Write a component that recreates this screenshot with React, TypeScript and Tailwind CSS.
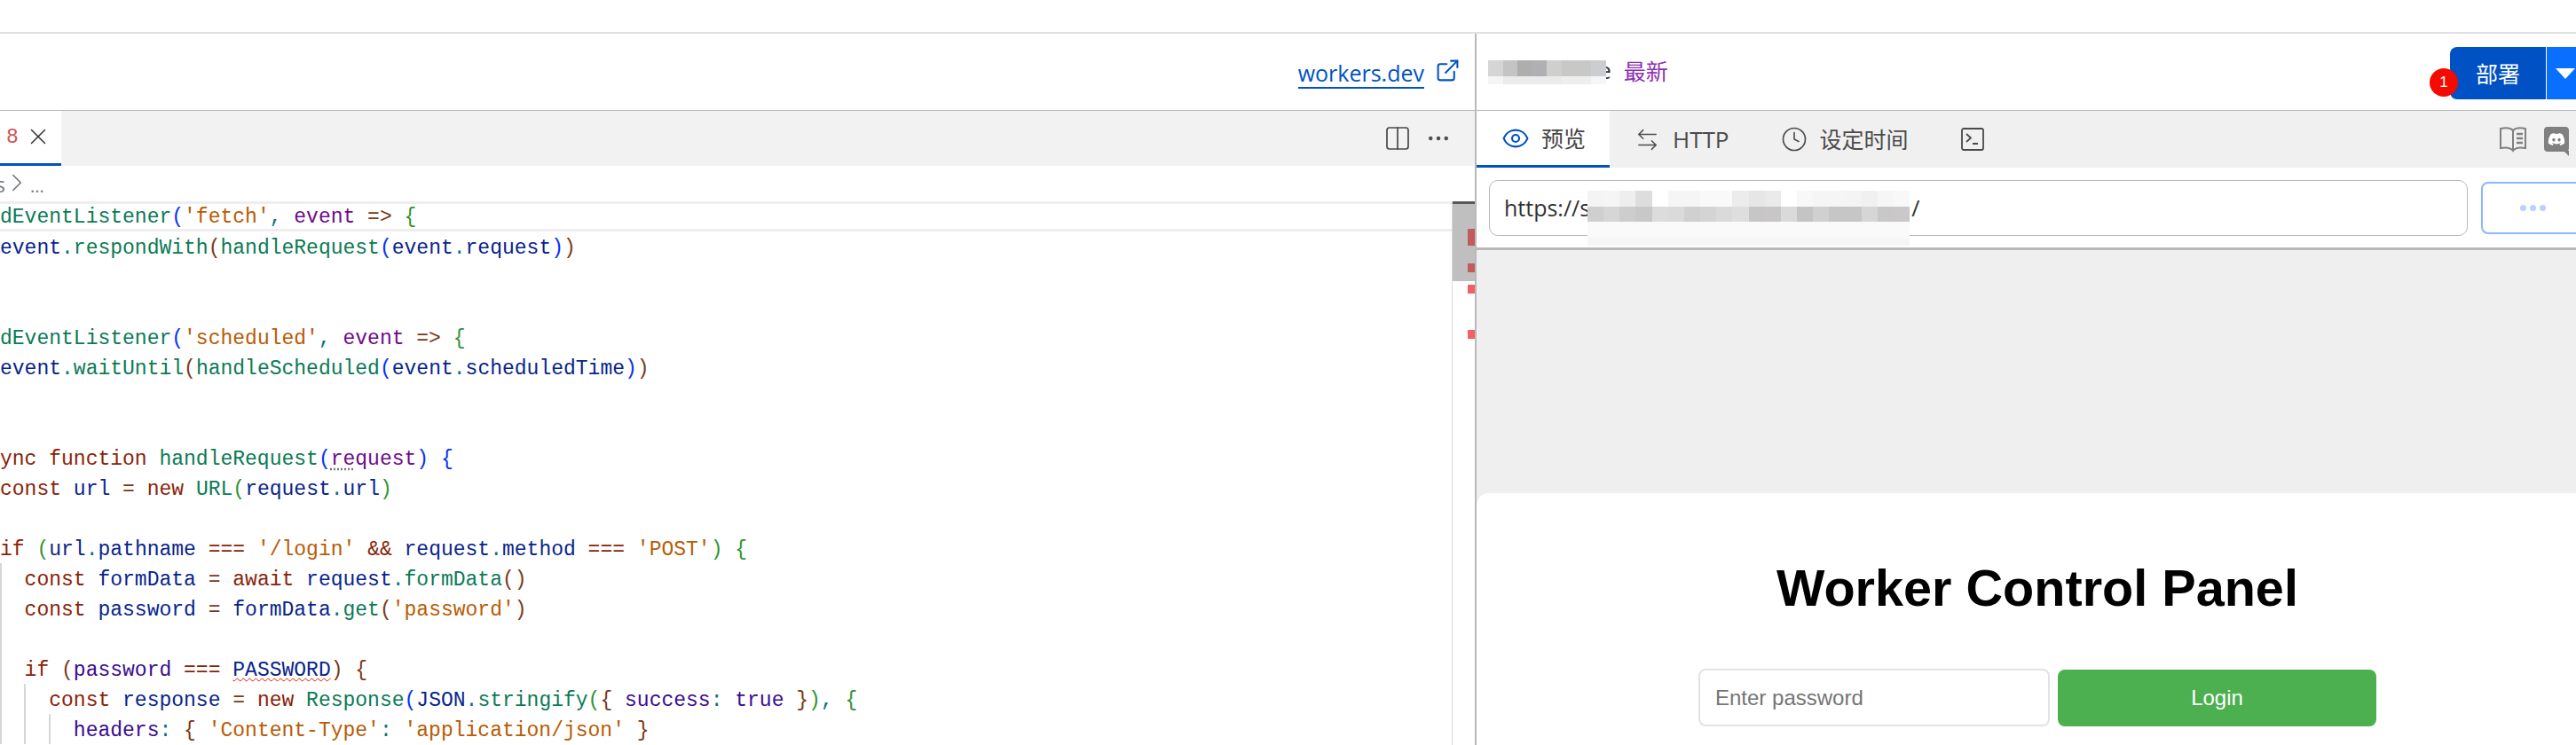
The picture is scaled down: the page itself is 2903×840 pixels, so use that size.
import React from 'react';
import { ChevronRight, Clock, Columns2, Ellipsis, ExternalLink, Eye, ArrowLeftRight, X } from 'lucide-react';
import { FaDiscord } from 'react-icons/fa';

const kw = 'text-[#8a2307]';
const vr = 'text-[#07248c]';
const fn = 'text-[#0b7a55]';
const st = 'text-[#b85b05]';
const pa = 'text-[#6f0a8a]';
const pr = 'text-[#3a0c8f]';
const op = 'text-[#7b3814]';
const b1 = 'text-[#0431fa]';
const b2 = 'text-[#319331]';
const b3 = 'text-[#7b3814]';
const pt = 'text-[#0b6f80]';

type Token = [string, string];

const codeLines: { tokens: Token[]; guides?: number }[] = [
  { tokens: [['addEventListener', fn], ['(', b1], ["'fetch'", st], [', ', pt], ['event', pa], [' => ', op], ['{', b2]] },
  { tokens: [['  event', vr], ['.', pt], ['respondWith', fn], ['(', b3], ['handleRequest', fn], ['(', b1], ['event', vr], ['.', pt], ['request', vr], [')', b1], [')', b3]] },
  { tokens: [['})', b2]] },
  { tokens: [] },
  { tokens: [['addEventListener', fn], ['(', b1], ["'scheduled'", st], [', ', pt], ['event', pa], [' => ', op], ['{', b2]] },
  { tokens: [['  event', vr], ['.', pt], ['waitUntil', fn], ['(', b3], ['handleScheduled', fn], ['(', b1], ['event', vr], ['.', pt], ['scheduledTime', vr], [')', b1], [')', b3]] },
  { tokens: [['})', b2]] },
  { tokens: [] },
  { tokens: [['async function ', kw], ['handleRequest', fn], ['(', b1], ['request', pa], [')', b1], [' ', op], ['{', b1]] },
  { tokens: [['  const ', kw], ['url', vr], [' = ', op], ['new ', kw], ['URL', fn], ['(', b2], ['request', vr], ['.', pt], ['url', vr], [')', b2]] },
  { tokens: [] },
  { tokens: [['  if ', kw], ['(', b2], ['url', vr], ['.', pt], ['pathname', vr], [' === ', kw], ["'/login'", st], [' && ', kw], ['request', vr], ['.', pt], ['method', vr], [' === ', kw], ["'POST'", st], [')', b2], [' ', op], ['{', b2]] },
  { guides: 1, tokens: [['    const ', kw], ['formData', vr], [' = ', op], ['await ', kw], ['request', vr], ['.', pt], ['formData', fn], ['()', b3]] },
  { guides: 1, tokens: [['    const ', kw], ['password', vr], [' = ', op], ['formData', vr], ['.', pt], ['get', fn], ['(', b3], ["'password'", st], [')', b3]] },
  { guides: 1, tokens: [] },
  { guides: 1, tokens: [['    if ', kw], ['(', b3], ['password', pr], [' === ', kw], ['PASSWORD', 'squiggle'], [')', b3], [' ', op], ['{', b3]] },
  { guides: 2, tokens: [['      const ', kw], ['response', vr], [' = ', op], ['new ', kw], ['Response', fn], ['(', b1], ['JSON', vr], ['.', pt], ['stringify', fn], ['(', b2], ['{ ', b3], ['success', pr], [': ', pt], ['true', pr], [' }', b3], [')', b2], [', ', pt], ['{', b2]] },
  { guides: 3, tokens: [['        headers', pr], [': ', pt], ['{ ', b3], ["'Content-Type'", st], [': ', pt], ["'application/json'", st], [' }', b3]] },
];

const nameTop = ['#d5d5d5', '#c4c4c4', '#aeaeac', '#b0b0b4', '#cfcfcd', '#c8c8c6', '#c8c8c6', '#cccdd0'];
const nameBottom = ['#f5f5f5', '#ebebeb', '#ebebeb', '#ebebeb', '#ebebeb', '#eeeeee', '#eeeeee', '#f6f6f6'];
const urlTop = ['#f4f4f4', '#f5f5f5', '#eeeeee', '#dddddd', '#ffffff', '#f4f5f4', '#f4f5f4', '#f9f9f9', '#f9f9f9', '#ececec', '#e6e6e6', '#eaeaea', '#ffffff', '#f8f8f8', '#f5f5f5', '#f5f5f5', '#f4f4f4', '#f0f0f0', '#f6f6f6', '#f8f8f8'];
const urlMid = ['#cfcfcf', '#d6d6d6', '#cdcdcd', '#c8c8c8', '#dcdcdc', '#dadada', '#d0d0d0', '#d4d4d4', '#dadada', '#dedede', '#c6c6c6', '#c8c6c6', '#dadada', '#c4c4c4', '#d0d0d0', '#c6c6c6', '#c6c6c6', '#d6d6d6', '#c8c8c8', '#cac8c8'];

const Code: React.FC = () => (
  <div className="flex-1 min-w-0 overflow-hidden border-r border-[#d8d8d8] font-['Liberation_Mono',monospace] text-[23px] whitespace-pre">
    {codeLines.map((line, i) => (
      <div
        key={i}
        className={i === 0 ? 'relative h-[34px] leading-[31px] border-y-[3px] border-[#eeeeee]' : 'relative h-[34px] leading-[38px]'}
      >
        {line.guides && line.guides >= 1 ? <span className="absolute left-0 inset-y-0 w-[2px] bg-[#d6d6d6]" /> : null}
        {line.guides && line.guides >= 2 ? <span className="absolute left-[27px] inset-y-0 w-[2px] bg-[#d6d6d6]" /> : null}
        {line.guides && line.guides >= 3 ? <span className="absolute left-[55px] inset-y-0 w-[2px] bg-[#d6d6d6]" /> : null}
        <div className="-ml-[27.6px]">
          {line.tokens.map(([text, color], j) =>
            color === 'squiggle' ? (
              <span key={j} className="text-[#07248c] underline decoration-wavy decoration-[#e51400] decoration-1 underline-offset-2">
                {text}
              </span>
            ) : text === 'request' && color === pa ? (
              <span key={j} className={color}>
                <span className="underline decoration-dotted decoration-[#777777] underline-offset-4">re</span>quest
              </span>
            ) : (
              <span key={j} className={color}>
                {text}
              </span>
            )
          )}
        </div>
      </div>
    ))}
  </div>
);

const OverviewRuler: React.FC = () => (
  <div className="relative w-[25px] shrink-0">
    <div className="absolute top-0 inset-x-0 h-[90px] bg-[#bfbfbf] border-t-[3px] border-[#58585c]" />
    <div className="absolute top-[31px] right-0 w-[8px] h-[19px] bg-[#c25b5b]" />
    <div className="absolute top-[70px] right-0 w-[8px] h-[10px] bg-[#c25b5b]" />
    <div className="absolute top-[94px] right-0 w-[8px] h-[10px] bg-[#f55f5f]" />
    <div className="absolute top-[145px] right-0 w-[8px] h-[10px] bg-[#f55f5f]" />
  </div>
);

const EditorPane: React.FC = () => (
  <div className="w-[1662px] shrink-0 flex flex-col">
    <div className="h-[86px] flex items-center justify-end pr-[16px] text-[#0051c3]">
      <a className="border-b-2 border-[#0051c3] leading-[32px] text-[25px] mt-[3px] font-['Open_Sans',sans-serif]">workers.dev</a>
      <ExternalLink className="ml-[12px] mb-[3px] w-[29px] h-[29px]" strokeWidth={1.7} />
    </div>
    <div className="h-[63px] border-t border-[#b9b9b9] bg-[#f2f2f2] flex items-center justify-between">
      <div className="w-[69px] h-full bg-white border-b-[3px] border-[#0051c3] flex items-center pl-[7px] gap-[7px]">
        <span className="text-[#c9565a] text-[23px] font-['Liberation_Mono',monospace] leading-none mt-[2px]">8</span>
        <X className="w-[30px] h-[30px] text-[#333333] mb-[2px]" strokeWidth={1.2} />
      </div>
      <div className="flex items-center gap-[15px] pr-[26px] text-[#4a4a4a]">
        <Columns2 className="w-[32px] h-[32px]" strokeWidth={1.3} />
        <Ellipsis className="w-[30px] h-[30px]" strokeWidth={1.6} />
      </div>
    </div>
    <div className="h-[40px] flex items-center text-[#777777] text-[23px] font-['Open_Sans',sans-serif]">
      <span className="-ml-[5px] mt-[2px]">s</span>
      <ChevronRight className="-ml-[4px] w-[34px] h-[34px] text-[#6f6f6f] mt-[-2px]" strokeWidth={1.1} />
      <span className="-ml-[2px] text-[20px] mt-[6px]">...</span>
    </div>
    <div className="flex-1 flex min-h-0 overflow-hidden">
      <Code />
      <OverviewRuler />
    </div>
  </div>
);

const PreviewPane: React.FC = () => (
  <div className="flex-1 min-w-0 overflow-hidden flex flex-col border-l-2 border-[#b9b9b9] font-['Open_Sans','Noto_Sans_CJK_SC',sans-serif]">
    {/* Deploy header */}
    <div className="h-[86px] flex items-center justify-between">
      <div className="flex items-center pl-[13px]">
        <div className="flex flex-col">
          <div className="flex h-[18px]">
            {nameTop.map((c, i) => (
              <span key={i} className="w-[16.6px] h-full" style={{ backgroundColor: c }} />
            ))}
          </div>
          <div className="flex h-[9px]">
            {nameBottom.map((c, i) => (
              <span key={i} className="w-[16.6px] h-full" style={{ backgroundColor: c }} />
            ))}
          </div>
        </div>
        <span className="w-[6px] h-[24px] overflow-hidden text-[25px] leading-[24px] text-[#333333] mb-[4px]">
          <span className="block -ml-[8px]">e</span>
        </span>
        <span className="ml-[14px] text-[25px] text-[#8f2fb0] font-['Noto_Sans_CJK_SC',sans-serif] mb-[3px]">最新</span>
      </div>
      <div className="relative flex h-[59px] mt-[3px]">
        <span className="absolute -left-[23px] top-[24px] w-[32px] h-[32px] rounded-full bg-[#f50a00] text-white text-[17px] flex items-center justify-center font-['Liberation_Sans',sans-serif] z-10">
          1
        </span>
        <button className="w-[108px] h-full rounded-l-[8px] bg-[#0051c3] text-white text-[25px] font-['Noto_Sans_CJK_SC',sans-serif]">
          部署
        </button>
        <div className="w-[33px] h-full ml-[1px] bg-[#086fff] flex items-center pl-[10px]">
          <svg width="22" height="12" viewBox="0 0 22 12" className="shrink-0">
            <path d="M0 0h22L11 12z" fill="#ffffff" />
          </svg>
        </div>
      </div>
    </div>

    {/* Tabs */}
    <div className="h-[65px] border-t border-[#b9b9b9] bg-[#f0f0f0] flex items-center text-[25px] text-[#4a4a4a]">
      <div className="w-[150px] h-full bg-white border-b-[3px] border-[#0051c3] flex items-center pl-[28px] gap-[13px] text-[#444444]">
        <Eye className="w-[32px] h-[32px] text-[#0051c3]" strokeWidth={1.6} />
        <span className="font-['Noto_Sans_CJK_SC',sans-serif]">预览</span>
      </div>
      <div className="flex items-center ml-[28px] gap-[14px]">
        <ArrowLeftRight className="w-[29px] h-[29px]" strokeWidth={1.2} />
        <span className="text-[26px]">HTTP</span>
      </div>
      <div className="flex items-center ml-[59px] gap-[13px]">
        <Clock className="w-[30px] h-[30px]" strokeWidth={1.3} />
        <span className="font-['Noto_Sans_CJK_SC',sans-serif]">设定时间</span>
      </div>
      <svg width="26" height="26" viewBox="0 0 26 26" fill="none" stroke="#4a4a4a" strokeWidth="1.8" className="ml-[60px]">
        <rect x="1" y="1" width="24" height="24" rx="2" />
        <path d="M6 7l5 4.5-5 4.5M13 18h6" />
      </svg>
      <svg width="32" height="30" viewBox="0 0 32 30" fill="none" stroke="#808080" strokeWidth="2" className="ml-auto">
        <path d="M16 5C13 2 7 2 2 3v22c5-1 11-1 14 3 3-4 9-4 14-3V3c-5-1-11-1-14 2zM16 5v23" />
        <path d="M20 9h7M20 14h7M20 19h7" strokeWidth="2.4" />
      </svg>
      <div className="relative ml-[19px] mr-[8px] w-[28px] h-[28px] rounded-[4px] bg-[#808080] flex items-center justify-center">
        <FaDiscord className="w-[20px] h-[20px] text-white" />
        <svg width="6" height="6" viewBox="0 0 6 6" className="absolute right-0 -bottom-[5px]">
          <path d="M0 0h6v6z" fill="#808080" />
        </svg>
      </div>
    </div>

    {/* URL bar */}
    <div className="h-[93px] shrink-0 flex items-start pt-[14px] pl-[14px] gap-[15px] border-b-[3px] border-[#b9b9b9]">
      <div className="relative w-[1103px] h-[63px] shrink-0 border border-[#b9b9b9] rounded-[10px] flex items-center pl-[16px] text-[25px] text-[#333333]">
        <span>https://s</span>
        <span className="inline-block w-[362px]" />
        <span>/</span>
        <div className="absolute left-[110px] top-[11px] w-[363px] flex flex-col">
          <div className="flex h-[18px]">
            {urlTop.map((c, i) => (
              <span key={i} className="flex-1 h-full" style={{ backgroundColor: c }} />
            ))}
          </div>
          <div className="flex h-[17px]">
            {urlMid.map((c, i) => (
              <span key={i} className="flex-1 h-full" style={{ backgroundColor: c }} />
            ))}
          </div>
          <div className="h-[18px] bg-[#fafafa]" />
          <div className="h-[9px] bg-[#f5f6f5]" />
        </div>
      </div>
      <div className="w-[130px] h-[59px] mt-[2px] shrink-0 border-2 border-[#8ab8f8] rounded-[8px] flex items-center justify-center gap-[4px] pr-[14px]">
        <span className="w-[7px] h-[7px] rounded-full bg-[#b9d2fb]" />
        <span className="w-[7px] h-[7px] rounded-full bg-[#b9d2fb]" />
        <span className="w-[7px] h-[7px] rounded-full bg-[#b9d2fb]" />
      </div>
    </div>

    {/* Preview frame */}
    <div className="flex-1 min-h-0 bg-[#efefef] pt-[274px]">
      <div className="w-[1264px] h-[284px] bg-white rounded-t-[14px] flex flex-col items-center pt-[70px] font-['Liberation_Sans',sans-serif]">
        <h1 className="text-[57.6px] leading-[74px] font-bold text-black">Worker Control Panel</h1>
        <div className="mt-[54px] w-[764px] flex items-start gap-[9px]">
          <input
            placeholder="Enter password"
            className="w-[396px] h-[65px] border-2 border-[#e2e2e2] rounded-[8px] px-[17px] text-[24px] placeholder:text-[#757575] outline-none"
          />
          <button className="w-[359px] h-[64px] mt-[1px] rounded-[8px] bg-[#4caf50] text-white text-[24px]">Login</button>
        </div>
      </div>
    </div>
  </div>
);

export default function App() {
  return (
    <div className="w-[2903px] h-[840px] overflow-hidden bg-white flex flex-col">
      <div className="h-[38px] shrink-0 border-b-2 border-[#e0e0e0]" />
      <div className="flex-1 min-h-0 flex">
        <EditorPane />
        <PreviewPane />
      </div>
    </div>
  );
}
